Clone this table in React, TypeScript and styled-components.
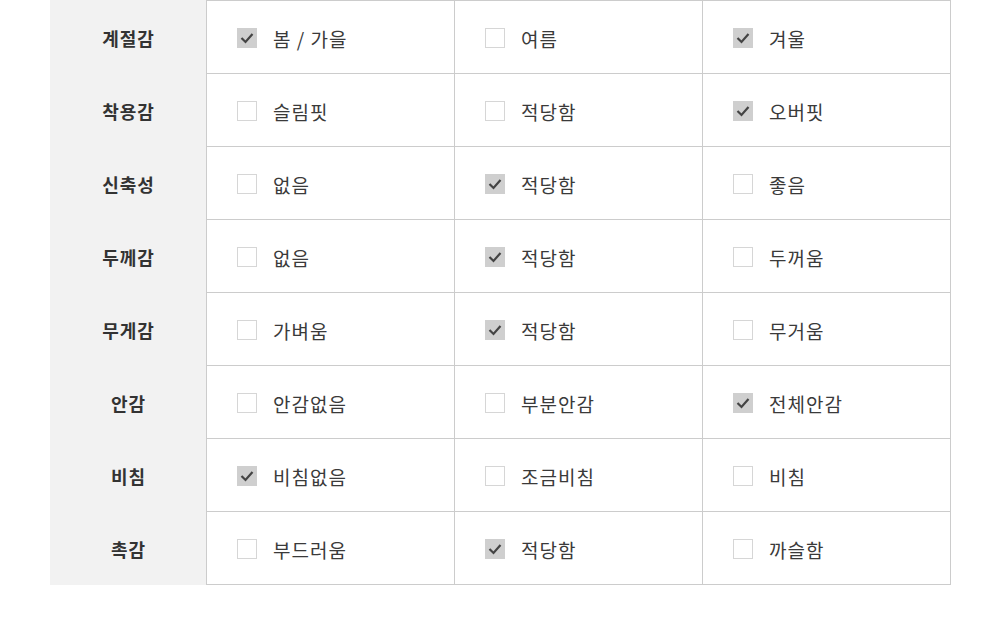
import React from 'react'
import styled, { createGlobalStyle } from 'styled-components'

const GlobalStyle = createGlobalStyle`
  body {
    margin: 0;
    background: #fff;
    font-family: "Noto Sans CJK KR", "Noto Sans", sans-serif;
  }
`

type Option = { label: string; checked: boolean }
type Row = { title: string; options: Option[] }

const rows: Row[] = [
  { title: '계절감', options: [{ label: '봄 / 가을', checked: true }, { label: '여름', checked: false }, { label: '겨울', checked: true }] },
  { title: '착용감', options: [{ label: '슬림핏', checked: false }, { label: '적당함', checked: false }, { label: '오버핏', checked: true }] },
  { title: '신축성', options: [{ label: '없음', checked: false }, { label: '적당함', checked: true }, { label: '좋음', checked: false }] },
  { title: '두께감', options: [{ label: '없음', checked: false }, { label: '적당함', checked: true }, { label: '두꺼움', checked: false }] },
  { title: '무게감', options: [{ label: '가벼움', checked: false }, { label: '적당함', checked: true }, { label: '무거움', checked: false }] },
  { title: '안감', options: [{ label: '안감없음', checked: false }, { label: '부분안감', checked: false }, { label: '전체안감', checked: true }] },
  { title: '비침', options: [{ label: '비침없음', checked: true }, { label: '조금비침', checked: false }, { label: '비침', checked: false }] },
  { title: '촉감', options: [{ label: '부드러움', checked: false }, { label: '적당함', checked: true }, { label: '까슬함', checked: false }] },
]

export default function App() {
  return (
    <>
      <GlobalStyle />
      <Page>
        <Table>
          {rows.map((row, i) => (
            <TableRow key={row.title} last={i === rows.length - 1}>
              <Title>{row.title}</Title>
              {row.options.map((opt, j) => (
                <Cell key={j} lastCol={j === row.options.length - 1} lastRow={i === rows.length - 1}>
                  <Box checked={opt.checked}>
                    {opt.checked && (
                      <svg width="14" height="12" viewBox="0 0 14 12">
                        <polyline points="1.5,6 5.5,10 12.5,2" fill="none" stroke="#444" strokeWidth="2.2" />
                      </svg>
                    )}
                  </Box>
                  <Label>{opt.label}</Label>
                </Cell>
              ))}
            </TableRow>
          ))}
        </Table>
      </Page>
    </>
  )
}

const Page = styled.div`
  padding-left: 50px;
`

const Table = styled.div`
  width: 901px;
  display: flex;
  flex-direction: column;
`

const TableRow = styled.div<{ last?: boolean }>`
  display: grid;
  grid-template-columns: 156px 248px 248px 249px;
  height: ${p => (p.last ? '74px' : '73px')};
`

const Title = styled.div`
  background: #f2f2f2;
  display: flex;
  align-items: center;
  justify-content: center;
  padding: 2px 0 0 1px;
  font-size: 18px;
  font-weight: 700;
  letter-spacing: 1px;
  color: #333;
`

const Cell = styled.div<{ lastCol?: boolean; lastRow?: boolean }>`
  box-sizing: border-box;
  display: flex;
  align-items: center;
  gap: 16px;
  padding: 2px 0 0 30px;
  border-top: 1px solid #ccc;
  border-left: 1px solid #ccc;
  border-right: ${p => (p.lastCol ? '1px solid #ccc' : 'none')};
  border-bottom: ${p => (p.lastRow ? '1px solid #ccc' : 'none')};
`

const Box = styled.span<{ checked?: boolean }>`
  box-sizing: border-box;
  width: 20px;
  height: 20px;
  display: flex;
  align-items: center;
  justify-content: center;
  background: ${p => (p.checked ? '#cfcfcf' : '#fff')};
  border: ${p => (p.checked ? 'none' : '1px solid #d6d6d6')};
`

const Label = styled.span`
  font-size: 19px;
  letter-spacing: 1px;
  color: #3a3a3a;
`
